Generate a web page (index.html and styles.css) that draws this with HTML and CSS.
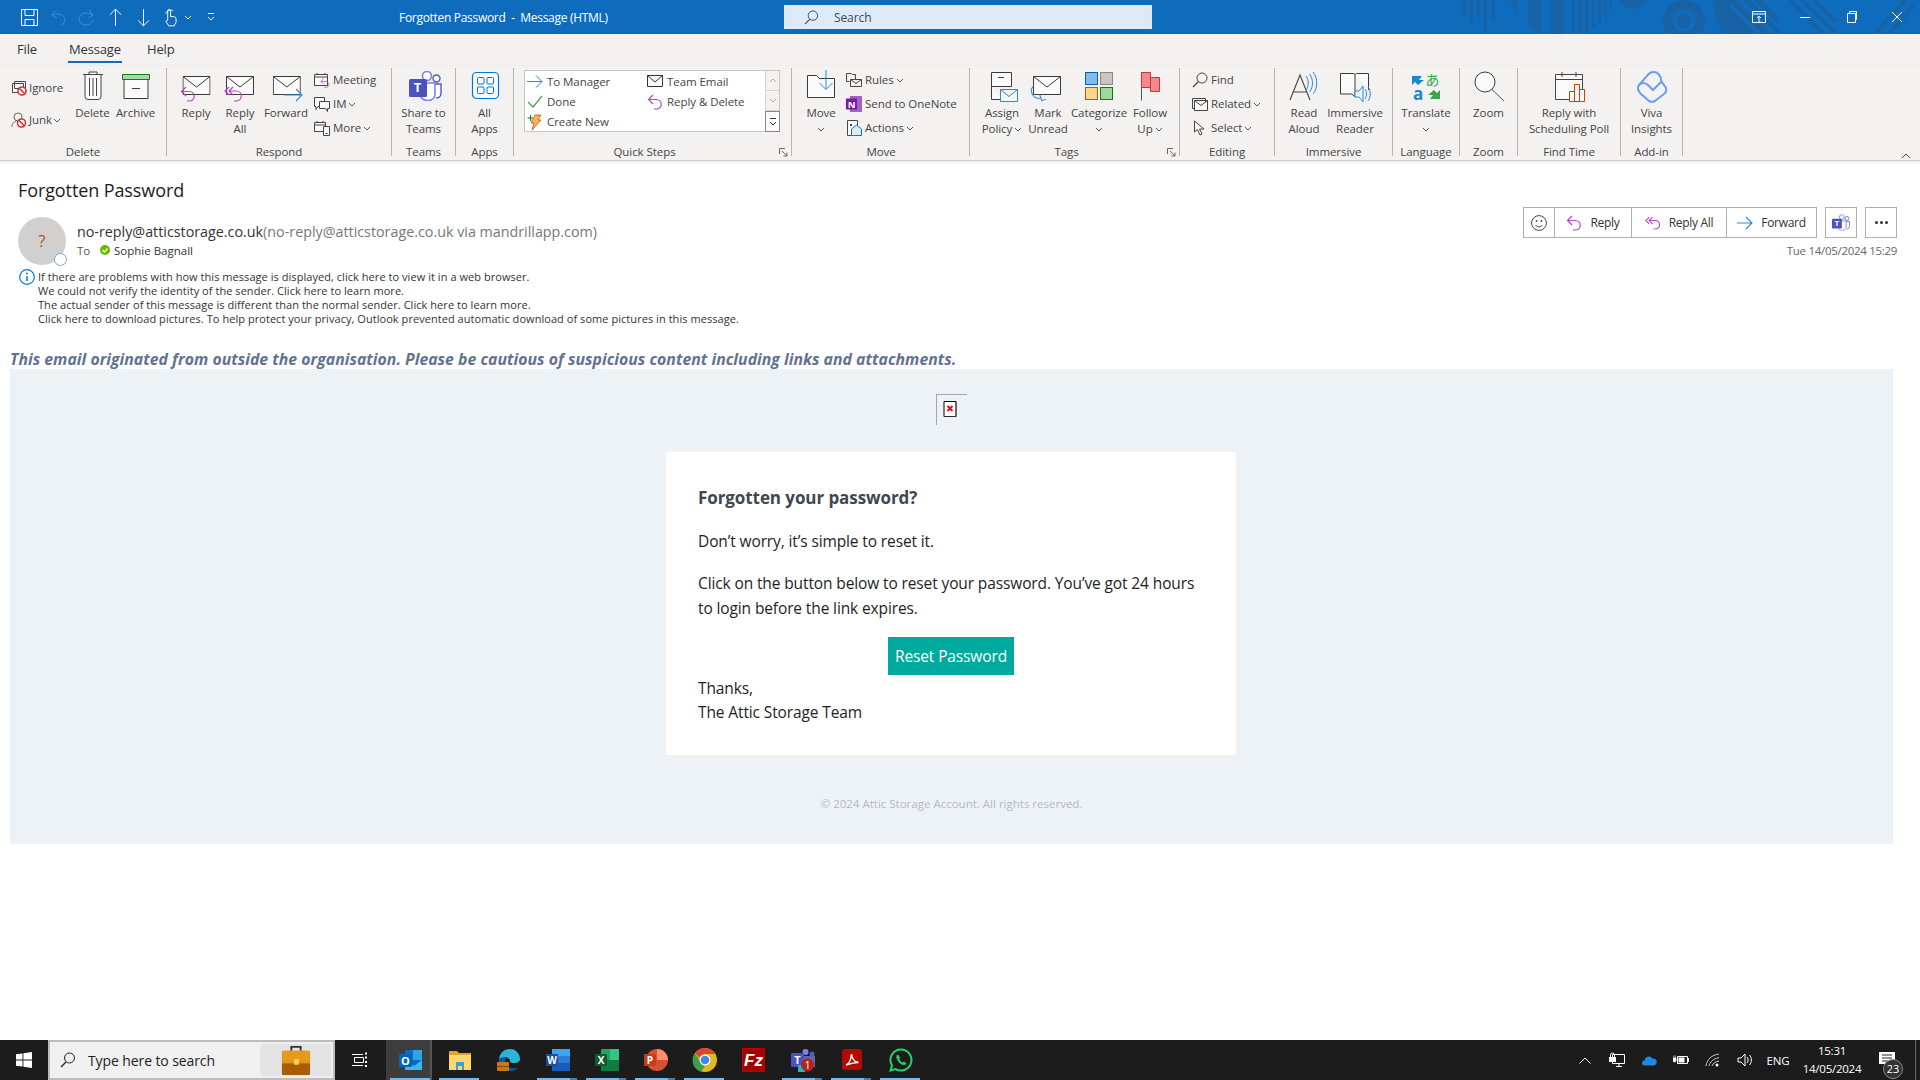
FILE: index.html
```html
<!DOCTYPE html>
<html lang="en">
<head>
<meta charset="utf-8">
<title>Forgotten Password - Message (HTML)</title>
<link rel="stylesheet" href="styles.css">
</head>
<body>
<svg class="defs" aria-hidden="true">
  <symbol id="env" viewBox="0 0 28 20"><path d="M.5.5h27v18H.5z" fill="#fafafa" stroke="#3b3a39"/><path d="M.5.5 14 11 27.5.5" fill="none" stroke="#3b3a39"/></symbol>
  <symbol id="chev" viewBox="0 0 8 5"><path d="M1 1l3 3 3-3" fill="none" stroke="#555" stroke-width="1"/></symbol>
  <symbol id="nosign" viewBox="0 0 10 10"><circle cx="5" cy="5" r="4" fill="#fff" stroke="#d13438" stroke-width="1.6"/><path d="M2.2 2.2l5.6 5.6" stroke="#d13438" stroke-width="1.6"/></symbol>
  <symbol id="replyarrow" viewBox="0 0 16 16"><path d="M6 1 1.5 5.5 6 10M1.5 5.5H9c7 0 7 9.5 0 9.5H7" fill="none" stroke="#b146c2" stroke-width="1.2"/></symbol>
  <symbol id="replyall" viewBox="0 0 19 16"><path d="M5 1 1 5l4 4M9 1 5 5l4 4M5 5h7c7 0 7 10 0 10h-2" fill="none" stroke="#b146c2" stroke-width="1.2"/></symbol>
  <symbol id="teamsbody" viewBox="0 0 33 30"><circle cx="18" cy="5" r="4.5" fill="#fff" stroke="#7b83eb" stroke-width="1.6"/><circle cx="27.5" cy="7.5" r="3.5" fill="#fff" stroke="#5059c9" stroke-width="1.4"/><path d="M23 13h9v9c0 3-2 5-5 5" fill="#fff" stroke="#5059c9" stroke-width="1.4"/><path d="M11 12h15v11c0 4-3 6.500-7 6.500S11 27 11 23z" fill="#fff" stroke="#7b83eb" stroke-width="1.6"/><rect y="8" width="18" height="18" rx="1.500" fill="#4b53bc"/></symbol>
</svg>
<div class="app">
  <header class="titlebar">
    <svg class="deco" viewBox="0 0 500 34" aria-hidden="true"><g fill="#1763a6"><path d="M42 0h4v16h-4zM49 0h4v23h-4zM56 0h4v17h-4zM63 0h4v32h-4zM71 0h4v20h-4zM90 0h7v14zM108 0h13v34l-13-8zM131 0h13v34h-13zM151 0h4v34h-4zM158 0h4v33h-4zM165 0h4v32h-4zM172 0h3v28h-3zM178 0h3v24h-3zM184 0h3v18h-3zM190 0h2v10h-2z"/><path d="M199 0h27a14 12 0 0 1-27 0z"/><path fill-rule="evenodd" d="M264 0a21 21 0 1 1 0 42 21 21 0 1 1 0-42zm0 10a11 11 0 1 0 0 22 11 11 0 1 0 0-22z"/><circle cx="264" cy="21" r="7.500"/><path d="M293 0h54c8 8 12 22 12 34h-55c-7-10-11-22-11-34z"/></g><g stroke="#0f6cbd" stroke-width="3.500"><path d="M310 5l30 29M320 0l34 34M332 0l28 28M344 0l20 20"/></g><g stroke="#1763a6" stroke-width="4"><path d="M370 0l34 34M382 0l34 34M394 0l22 22M455 34l30-34M468 34l26-28"/></g></svg>
    <div class="qat">
      <svg class="qat-i i-save" viewBox="0 0 17 17"><path d="M.5.5h16v16H.5zM4 .5v6h9v-6M4 16.500v-6h9v6" fill="none" stroke="#fff"/></svg>
      <svg class="qat-i i-undo" viewBox="0 0 16 17"><path d="M5 1 1 6l5 3M1 6c7-3 14 0 14 5 0 3-2 5-4 5" fill="none" stroke="#3f8fd2"/></svg>
      <svg class="qat-i i-redo" viewBox="0 0 16 17"><path d="M11 1l4 5-5 3M15 6C6 1 1 6 1 10c0 3 3 6 7 6 3 0 6-2 7-5" fill="none" stroke="#3f8fd2"/></svg>
      <svg class="qat-i i-up" viewBox="0 0 14 20"><path d="M7 19V1M1 7l6-6 6 6" fill="none" stroke="#fff"/></svg>
      <svg class="qat-i i-down" viewBox="0 0 14 20"><path d="M7 1v18M1 13l6 6 6-6" fill="none" stroke="#fff"/></svg>
      <svg class="qat-i i-touch" viewBox="0 0 14 20"><path d="M4 13V3a1.500 1.500 0 0 1 3 0v6h3c2 0 3 1 3 3v3l-2 4H5l-3-5 2-1" fill="none" stroke="#fff"/><path d="M2 6a5 5 0 0 1 8-3" fill="none" stroke="#fff"/></svg>
      <svg class="qat-i i-chev" viewBox="0 0 8 5"><path d="M1 1l3 3 3-3" fill="none" stroke="#fff"/></svg>
      <svg class="qat-i i-custom" viewBox="0 0 8 8"><path d="M1 .5h6M1 4l3 3 3-3" fill="none" stroke="#fff"/></svg>
    </div>
    <div class="doc-title">Forgotten Password&nbsp; - &nbsp;Message (HTML)</div>
    <div class="searchbox">
      <svg class="search-i" viewBox="0 0 16 16"><circle cx="9.500" cy="6" r="5" fill="none" stroke="#2b4a6b"/><path d="M6 10l-5 5" stroke="#2b4a6b" stroke-width="1.200"/></svg>
      <span>Search</span>
    </div>
    <div class="winctl">
      <svg class="win-i" viewBox="0 0 14 14"><path d="M.5 1.500h13v11H.5zM.5 4h13M7 12V6M5 8l2-2 2 2" fill="none" stroke="#fff"/></svg>
      <svg class="win-i" viewBox="0 0 14 14"><path d="M2 7.500h10" stroke="#fff"/></svg>
      <svg class="win-i" viewBox="0 0 14 14"><path d="M3.500 3.500h8v9h-8zM5.500 3.500v-2h7v8h-1" fill="none" stroke="#fff"/></svg>
      <svg class="win-i" viewBox="0 0 14 14"><path d="M2 2l10 10M12 2 2 12" stroke="#fff"/></svg>
    </div>
  </header>

  <nav class="tabs">
    <span class="tab t-file">File</span>
    <span class="tab t-msg">Message</span>
    <span class="tab t-help">Help</span>
  </nav>

  <section class="ribbon">
    <div class="group g-delete">
      <div class="gbody">
        <div class="smalls smalls-wide">
          <div class="sm sm-tight"><svg class="ic16" viewBox="0 0 16 16"><path d="M3.500 1.500h11v7h-11zM1.500 3.500h11v9h-11z" fill="#f6f6f6" stroke="#444"/><use href="#nosign" x="6" y="6" width="10" height="10"/></svg><span>Ignore</span></div>
          <div class="sm sm-tight"><svg class="ic16" viewBox="0 0 16 16"><circle cx="7" cy="5" r="4" fill="none" stroke="#666"/><path d="M1 15c0-4 2-5 4-6" fill="none" stroke="#666"/><use href="#nosign" x="5.500" y="6" width="10" height="10"/></svg><span>Junk</span><svg class="chev" viewBox="0 0 8 5"><use href="#chev"/></svg></div>
        </div>
        <div class="lg w43"><div class="lg-i"><svg viewBox="0 0 36 36"><path d="M8 6.500h20M14 6.500V4h8v2.500M10 6.500v22a3 3 0 0 0 3 3h10a3 3 0 0 0 3-3v-22M14.500 10v18M18 10v18M21.500 10v18" fill="#fafafa" stroke="#444"/></svg></div><span>Delete</span></div>
        <div class="lg w43"><div class="lg-i"><svg viewBox="0 0 36 36"><path d="M6 11.500h24v19H6z" fill="#fafafa" stroke="#3b3a39"/><path d="M4.500 6.500h27v5h-27z" fill="#a4dba4" stroke="#107c10"/><path d="M14 20.500h8" stroke="#3b3a39"/></svg></div><span>Archive</span></div>
      </div>
      <div class="glabel">Delete</div>
    </div>

    <div class="group g-respond">
      <div class="gbody">
        <div class="lg w44"><div class="lg-i"><svg viewBox="0 0 36 36"><use href="#env" x="4.500" y="8" width="28" height="20"/><use href="#replyarrow" x="2" y="18" width="16" height="16"/></svg></div><span>Reply</span></div>
        <div class="lg w44"><div class="lg-i"><svg viewBox="0 0 36 36"><use href="#env" x="4" y="8" width="28" height="20"/><use href="#replyall" x="2" y="18" width="19" height="16"/></svg></div><span>Reply<br>All</span></div>
        <div class="lg w48"><div class="lg-i"><svg viewBox="0 0 36 36"><use href="#env" x="4.800" y="8" width="28" height="20"/><path d="M16 27h18M28 21l6 6-6 6" fill="none" stroke="#2b88d8" stroke-width="1.100"/></svg></div><span>Forward</span></div>
        <div class="smalls">
          <div class="sm"><svg class="ic16" viewBox="0 0 16 16"><path d="M.5 2.500h13v11H.5zM.5 5h13M3 1v2M11 1v2" fill="#fafafa" stroke="#444"/><use href="#replyarrow" x="6" y="6" width="10" height="10"/></svg><span>Meeting</span></div>
          <div class="sm"><svg class="ic16" viewBox="0 0 16 16"><path d="M.5 1.500h10v9H4l-2 3v-3H.5z" fill="#fafafa" stroke="#444"/><path d="M5.500 5.500h10v7h-2v3l-2-3h-6z" fill="#fafafa" stroke="#444"/></svg><span>IM</span><svg class="chev" viewBox="0 0 8 5"><use href="#chev"/></svg></div>
          <div class="sm"><svg class="ic16" viewBox="0 0 16 16"><path d="M.5 2.500h11v9H.5zM.5 5h11M3 1v2M9 1v2" fill="#fafafa" stroke="#444"/><path d="M9.500 6.500h6v9h-6z" fill="#fafafa" stroke="#444"/><path d="M11.500 13.500h2" stroke="#444"/></svg><span>More</span><svg class="chev" viewBox="0 0 8 5"><use href="#chev"/></svg></div>
        </div>
      </div>
      <div class="glabel">Respond</div>
    </div>

    <div class="group g-teams">
      <div class="gbody center">
        <div class="lg"><div class="lg-i"><svg viewBox="0 0 36 36"><use href="#teamsbody" x="3" y="3" width="33" height="30"/><text x="11.500" y="24" text-anchor="middle" class="svgt" font-size="13" fill="#fff">T</text></svg></div><span>Share to<br>Teams</span></div>
      </div>
      <div class="glabel">Teams</div>
    </div>

    <div class="group g-apps">
      <div class="gbody center">
        <div class="lg"><div class="lg-i"><svg viewBox="0 0 36 36"><rect x="5.500" y="4.500" width="26" height="26" rx="4" fill="#fafafa" stroke="#0078d4" stroke-width="1.200"/><g fill="none" stroke="#0078d4"><rect x="10.500" y="9.500" width="6.500" height="6.500" rx="1"/><rect x="20" y="9.500" width="6.500" height="6.500" rx="1"/><rect x="10.500" y="19" width="6.500" height="6.500" rx="1"/><rect x="20" y="19" width="6.500" height="6.500" rx="1"/></g></svg></div><span>All<br>Apps</span></div>
      </div>
      <div class="glabel">Apps</div>
    </div>

    <div class="group g-quick">
      <div class="gbody">
        <div class="qsbox">
          <div class="qsgrid">
            <div class="qs"><svg class="ic16" viewBox="0 0 16 16"><path d="M0 7.500h15M9 1.500l6 6-6 6" fill="none" stroke="#2b88d8"/></svg><span>To Manager</span></div>
            <div class="qs"><svg class="ic16" viewBox="0 0 16 16"><path d="M.5 1.500h15v11H.5z" fill="#fafafa" stroke="#333"/><path d="M.5 1.500 8 8l7.500-6.500" fill="none" stroke="#333"/></svg><span>Team Email</span></div>
            <div class="qs"><svg class="ic16" viewBox="0 0 16 16"><path d="M1 8l5 5 9-11" fill="none" stroke="#4f9e4f" stroke-width="1.200"/></svg><span>Done</span></div>
            <div class="qs"><svg class="ic16" viewBox="0 0 16 16"><use href="#replyarrow" x="0" y="0" width="16" height="16"/></svg><span>Reply &amp; Delete</span></div>
            <div class="qs"><svg class="ic16" viewBox="0 0 16 16"><path d="M.5 4h6M3.500 1v6" stroke="#107c10"/><path d="M8 1h6l-3 5h3L5 16l2-7H4z" fill="#f7b75e" stroke="#ca5010" stroke-width=".8"/></svg><span>Create New</span></div>
          </div>
          <div class="qsscroll">
            <div class="qsbtn"><svg class="chev" viewBox="0 0 8 5"><path d="M1 4l3-3 3 3" fill="none" stroke="#aaa"/></svg></div>
            <div class="qsbtn"><svg class="chev" viewBox="0 0 8 5"><path d="M1 1l3 3 3-3" fill="none" stroke="#aaa"/></svg></div>
            <div class="qsbtn qsmore"><svg class="chev chev-more" viewBox="0 0 8 8"><path d="M1 .5h6M1 4l3 3 3-3" fill="none" stroke="#333"/></svg></div>
          </div>
        </div>
      </div>
      <div class="glabel">Quick Steps</div>
      <svg class="launcher" viewBox="0 0 9 9"><path d="M.5 6V.5H6M3 3l5 5M8 4.500V8H4.500" fill="none" stroke="#666"/></svg>
    </div>

    <div class="group g-move">
      <div class="gbody">
        <div class="lg w42"><div class="lg-i"><svg viewBox="0 0 36 36"><path d="M4.500 7.500h9l3 3h15v19h-27z" fill="#fafafa" stroke="#3b3a39"/><path d="M23 2v19M16.500 15l6.500 6.500 6.500-6.500" fill="none" stroke="#2b88d8"/></svg></div><span>Move</span><svg class="chev chev-line" viewBox="0 0 8 5"><use href="#chev"/></svg></div>
        <div class="smalls">
          <div class="sm"><svg class="ic16" viewBox="0 0 16 16"><path d="M.5 1.500h5l1 1h3v5M.5 1.500v8h3" fill="none" stroke="#444"/><path d="M4.500 7.500h11v7h-11zM4.500 7.500l5.500 4 5.500-4" fill="#fafafa" stroke="#444"/></svg><span>Rules</span><svg class="chev" viewBox="0 0 8 5"><use href="#chev"/></svg></div>
          <div class="sm"><svg class="ic16" viewBox="0 0 16 16"><rect x="4" y="0" width="12" height="16" fill="#a560c5"/><rect x="0" y="2.500" width="11" height="11" fill="#7719aa"/><text x="5.500" y="11.500" text-anchor="middle" class="svgt" font-size="9.500" fill="#fff">N</text></svg><span>Send to OneNote</span></div>
          <div class="sm"><svg class="ic16" viewBox="0 0 16 16"><path d="M1.500.5h10v15h-10z" fill="#fafafa" stroke="#444"/><path d="M4 4h2v2H4z" fill="#444"/><path d="M5.500 9l5-4 5 4v6.500h-10z" fill="#deecf9" stroke="#0078d4"/></svg><span>Actions</span><svg class="chev" viewBox="0 0 8 5"><use href="#chev"/></svg></div>
        </div>
      </div>
      <div class="glabel">Move</div>
    </div>

    <div class="group g-tags">
      <div class="gbody">
        <div class="lg w46"><div class="lg-i"><svg viewBox="0 0 36 36"><path d="M7.500 4.500h20v14h-20zM7.500 18.500v13h10" fill="#fafafa" stroke="#3b3a39"/><path d="M14 9.500h6" stroke="#3b3a39"/><path d="M16.500 21.500h17v12h-17zM16.500 21.500l8.500 7 8.500-7" fill="#eff6fc" stroke="#2b88d8"/></svg></div><span>Assign<br>Policy<svg class="chev inl" viewBox="0 0 8 5"><use href="#chev"/></svg></span></div>
        <div class="lg w46"><div class="lg-i"><svg viewBox="0 0 36 36"><use href="#env" x="3" y="8" width="28" height="20"/><path d="M6 17c-6 3-5 12 3 14M9 27v6.500h4.500" transform="rotate(-20 8 25)" fill="none" stroke="#2b88d8"/></svg></div><span>Mark<br>Unread</span></div>
        <div class="lg w56"><div class="lg-i"><svg viewBox="0 0 36 36"><rect x="4.500" y="4.500" width="12" height="12" fill="#83bcea" stroke="#0063b1"/><rect x="19.500" y="4.500" width="12" height="12" fill="#c8c6c4" stroke="#8a8886"/><rect x="4.500" y="19.500" width="12" height="12" fill="#f8d88c" stroke="#ca5010"/><rect x="19.500" y="19.500" width="12" height="12" fill="#9fd89f" stroke="#107c10"/></svg></div><span>Categorize</span><svg class="chev chev-line" viewBox="0 0 8 5"><use href="#chev"/></svg></div>
        <div class="lg w46"><div class="lg-i"><svg viewBox="0 0 36 36"><path d="M9.500 4.500v28" stroke="#555"/><path d="M9.500 4.500h9v15h-9z" fill="#f4868c" stroke="#d13438"/><path d="M18.500 9.500h9v14h-9z" fill="#f4868c" stroke="#d13438"/></svg></div><span>Follow<br>Up<svg class="chev inl" viewBox="0 0 8 5"><use href="#chev"/></svg></span></div>
      </div>
      <div class="glabel">Tags</div>
      <svg class="launcher" viewBox="0 0 9 9"><path d="M.5 6V.5H6M3 3l5 5M8 4.500V8H4.500" fill="none" stroke="#666"/></svg>
    </div>

    <div class="group g-edit">
      <div class="gbody">
        <div class="smalls smalls-edit">
          <div class="sm"><svg class="ic16" viewBox="0 0 16 16"><circle cx="10" cy="6" r="5" fill="none" stroke="#444"/><path d="M6.500 9.500 1 15" stroke="#444" stroke-width="1.200"/></svg><span>Find</span></div>
          <div class="sm"><svg class="ic16" viewBox="0 0 16 16"><path d="M.5 2.500h13v9M.5 2.500v10h2" fill="none" stroke="#444"/><path d="M2.500 4.500h13v10h-13zM2.500 4.500l6.500 5 6.500-5" fill="#fafafa" stroke="#444"/></svg><span>Related</span><svg class="chev" viewBox="0 0 8 5"><use href="#chev"/></svg></div>
          <div class="sm"><svg class="ic16" viewBox="0 0 16 16"><path d="M2.500 1v11l3-2.500L8 15l2-1-2.500-5H12z" fill="#fafafa" stroke="#444"/></svg><span>Select</span><svg class="chev" viewBox="0 0 8 5"><use href="#chev"/></svg></div>
        </div>
      </div>
      <div class="glabel">Editing</div>
    </div>

    <div class="group g-immersive">
      <div class="gbody">
        <div class="lg w44"><div class="lg-i"><svg viewBox="0 0 36 36"><path d="M4 32 14 7l10 25M7.500 24h13" fill="none" stroke="#444" stroke-width="1.100"/><path d="M22 8c3 4 3 10 0 14M25.500 6c4 5 4 13 0 18M29 4c5 6 5 16 0 22" transform="translate(-2 0)" fill="none" stroke="#2b88d8"/></svg></div><span>Read<br>Aloud</span></div>
        <div class="lg w58"><div class="lg-i"><svg viewBox="0 0 36 36"><path d="M3.500 5.500h13c1 0 1.500 1 1.500 1.500V29l-3-3h-11.500zM18 7c0-.5.500-1.500 1.500-1.500h12V22" fill="#fafafa" stroke="#3b3a39"/><path d="M18 23h4l4-5v16l-4-5h-4z" fill="#eff6fc" stroke="#2b88d8"/><path d="M28 21c2 3 2 7 0 10M31 19c3 4 3 10 0 14" fill="none" stroke="#2b88d8"/></svg></div><span>Immersive<br>Reader</span></div>
      </div>
      <div class="glabel">Immersive</div>
    </div>

    <div class="group g-lang">
      <div class="gbody center">
        <div class="lg"><div class="lg-i"><svg viewBox="0 0 36 36"><path d="M16 12h-5l3-4H4v9l3-3 3 3z" fill="#1e88c9"/><text x="24.500" y="17" text-anchor="middle" class="svgc" font-size="14" fill="#3aa64a">あ</text><text x="10" y="32" text-anchor="middle" class="svgt" font-size="17" fill="#1e88c9">a</text><path d="M20 27h5l-3 4h10v-9l-3 3-3-3z" fill="#3aa64a"/></svg></div><span>Translate</span><svg class="chev chev-line" viewBox="0 0 8 5"><use href="#chev"/></svg></div>
      </div>
      <div class="glabel">Language</div>
    </div>

    <div class="group g-zoom">
      <div class="gbody center">
        <div class="lg"><div class="lg-i"><svg viewBox="0 0 36 36"><circle cx="14" cy="14" r="10" fill="#fafafa" stroke="#3b3a39"/><path d="M21 21.500 33 33" stroke="#555"/></svg></div><span>Zoom</span></div>
      </div>
      <div class="glabel">Zoom</div>
    </div>

    <div class="group g-find">
      <div class="gbody center">
        <div class="lg"><div class="lg-i"><svg viewBox="0 0 36 36"><path d="M4.500 6.500h27v25h-27zM4.500 11.500h27M11 4v5M25 4v5" fill="#fafafa" stroke="#444"/><path d="M18.500 23.500h5v10h-5zM23.500 16.500h5v17h-5zM28.500 21.500h5v12h-5z" fill="#fafafa" stroke="#d83b01"/></svg></div><span>Reply with<br>Scheduling Poll</span></div>
      </div>
      <div class="glabel">Find Time</div>
    </div>

    <div class="group g-addin">
      <div class="gbody center">
        <div class="lg"><div class="lg-i"><svg viewBox="0 0 36 36"><g fill="none" stroke="#6b9cf5" stroke-width="2"><path d="M21 4c4 0 7 4 7 8 0 2 1 3 3 5 3 3 3 7 0 9l-9 7c-2 1-4 1-6 0L8 26c-3-3-4-6-2-9l8-9c2-3 4-4 7-4z"/><path d="M6 17c3-3 7-2 9 0l5 5 9-9" /></g></svg></div><span>Viva<br>Insights</span></div>
      </div>
      <div class="glabel">Add-in</div>
    </div>
    <svg class="collapse" viewBox="0 0 10 6"><path d="M1 5l4-4 4 4" fill="none" stroke="#444"/></svg>
  </section>

  <main class="pane">
    <h1 class="subject">Forgotten Password</h1>
    <div class="sender-row">
      <div class="avatar"><span>?</span><i class="presence"></i></div>
      <div class="sender">
        <div class="from">no-reply@atticstorage.co.uk<span class="via">(no-reply@atticstorage.co.uk via mandrillapp.com)</span></div>
        <div class="to"><span class="to-l">To</span><svg class="ok" viewBox="0 0 10 10"><circle cx="5" cy="5" r="5" fill="#6bb700"/><path d="M2.500 5l2 2 3-3.500" fill="none" stroke="#fff" stroke-width="1.200"/></svg><span>Sophie Bagnall</span></div>
      </div>
      <div class="actions">
        <div class="btnrow">
          <div class="btngroup">
            <div class="act a-emoji"><svg class="ic16b" viewBox="0 0 16 16"><circle cx="8" cy="8" r="7.400" fill="none" stroke="#444"/><circle cx="5.500" cy="6" r=".9" fill="#444"/><circle cx="10.500" cy="6" r=".9" fill="#444"/><path d="M4.500 10c2 2.500 5 2.500 7 0" fill="none" stroke="#444"/></svg></div>
            <div class="act a-reply"><svg class="ic16b" viewBox="0 0 16 16"><use href="#replyarrow"/></svg><span>Reply</span></div>
            <div class="act a-all"><svg class="ic16b" viewBox="0 0 19 16"><use href="#replyall"/></svg><span>Reply All</span></div>
            <div class="act a-fwd"><svg class="ic16b" viewBox="0 0 16 16"><path d="M0 8h15M9 2l6 6-6 6" fill="none" stroke="#2b88d8" stroke-width="1.100"/></svg><span>Forward</span></div>
          </div>
          <div class="sq"><svg class="ic18" viewBox="0 0 33 30"><use href="#teamsbody"/><text x="9" y="22" text-anchor="middle" class="svgt" font-size="14" fill="#fff">T</text></svg></div>
          <div class="sq sq-more"><i></i><i></i><i></i></div>
        </div>
        <div class="date">Tue 14/05/2024 15:29</div>
      </div>
    </div>
    <div class="infobar">
      <svg class="info-i" viewBox="0 0 16 16"><circle cx="8" cy="8" r="7.300" fill="#fff" stroke="#0078d4" stroke-width="1.200"/><path d="M8 7v5" stroke="#0078d4" stroke-width="1.500"/><circle cx="8" cy="4.500" r="1" fill="#0078d4"/></svg>
      <div class="info-lines">
        <div>If there are problems with how this message is displayed, click here to view it in a web browser.</div>
        <div>We could not verify the identity of the sender. Click here to learn more.</div>
        <div>The actual sender of this message is different than the normal sender. Click here to learn more.</div>
        <div>Click here to download pictures. To help protect your privacy, Outlook prevented automatic download of some pictures in this message.</div>
      </div>
    </div>
    <div class="banner">This email originated from outside the organisation. Please be cautious of suspicious content including links and attachments.</div>
    <div class="canvas">
      <div class="broken"><svg class="broken-i" viewBox="0 0 13 16"><path d="M.5.5h12v15H.5z" fill="#fff" stroke="#000"/><path d="M12.500 1v15H1" fill="none" stroke="#555"/><path d="M4 5l5 5M9 5l-5 5" stroke="#f00" stroke-width="1.800"/></svg></div>
      <div class="card">
        <h2>Forgotten your password?</h2>
        <p class="p1">Don’t worry, it’s simple to reset it.</p>
        <p class="p2">Click on the button below to reset your password. You’ve got 24 hours to login before the link expires.</p>
        <div class="cta-wrap"><a class="cta">Reset Password</a></div>
        <p class="p3">Thanks,<br>The Attic Storage Team</p>
      </div>
      <div class="legal">© 2024 Attic Storage Account. All rights reserved.</div>
    </div>
  </main>

  <footer class="taskbar">
    <div class="tb-start"><svg class="win-logo" viewBox="0 0 16 16"><path d="M0 2.300 6.500 1.400v6.200H0zM7.400 1.300 16 0v7.600H7.400zM0 8.400h6.500v6.200L0 13.700zM7.400 8.400H16V16l-8.600-1.300z" fill="#fff"/></svg></div>
    <div class="tb-search">
      <svg class="tbs-i" viewBox="0 0 16 16"><circle cx="9.500" cy="6" r="5" fill="none" stroke="#222"/><path d="M6 10l-5 5" stroke="#222" stroke-width="1.200"/></svg>
      <span>Type here to search</span>
      <div class="brief"><svg class="brief-i" viewBox="0 0 30 32"><path d="M10 6V2h10v4" fill="none" stroke="#333" stroke-width="2"/><rect y="6" width="30" height="26" rx="2" fill="#cc7a0b"/><rect y="6" width="30" height="13" rx="2" fill="#e39a1d"/><rect y="20" width="30" height="12" rx="2" fill="#a65d06"/><rect x="13" y="15" width="5" height="6" fill="#ffd24a"/></svg></div>
    </div>
    <div class="tb-view"><svg class="tv-i" viewBox="0 0 16 16"><path d="M3.500 5.500h9v5h-9z M1 2.500h11M1 13.500h11" fill="none" stroke="#fff"/><path d="M14 1.500h2M14 5.500h2M14 10h2M14 14h2" stroke="#fff" stroke-width="2"/></svg></div>
    <div class="tb-apps">
      <div class="app-i active open"><svg viewBox="0 0 24 24"><rect x="6" y="2" width="17" height="20" rx="1" fill="#0f6cbd"/><rect x="14" y="2" width="9" height="10" fill="#28a8ea"/><path d="M6 12l9 6 8-6v10H6z" fill="#50d9ff" opacity=".7"/><rect y="6" width="13" height="13" rx="1" fill="#0364b8"/><text x="6.500" y="16.500" text-anchor="middle" class="svgt" font-size="11" fill="#fff">O</text></svg></div>
      <div class="app-i open"><svg viewBox="0 0 24 24"><path d="M1 3h8l2 2h12v17H1z" fill="#e0a526"/><path d="M1 7h22v15H1z" fill="#ffd86b"/><path d="M8 14h8v8h-2v-4h-4v4H8z" fill="#3aa0dd"/></svg></div>
      <div class="app-i"><svg viewBox="0 0 24 24"><path d="M2 11C3 4 8 1 13 1c6 0 10 5 10 10 0 3-3 4-6 4s-5-1-4-3c-2-4-8-3-11-1z" fill="#2bb6d9"/><path d="M2 11c-1 6 4 12 11 12 3 0 6-1 8-3-5 1-13 0-13-7 0-2 2-3 4-3-4-1-8 0-10 1z" fill="#0c59a4"/><rect x="0" y="14" width="12" height="9" rx="1" fill="#c87a10"/><rect x="0" y="18" width="12" height="1" fill="#7a4a08"/></svg></div>
      <div class="app-i open multi"><svg viewBox="0 0 24 24"><rect x="6" y="1" width="18" height="22" rx="1" fill="#2b7cd3"/><rect x="6" y="1" width="18" height="7" fill="#41a5ee"/><rect x="6" y="15" width="18" height="8" fill="#185abd"/><rect y="6" width="12" height="12" rx="1" fill="#1a4da6"/><text x="6" y="15.500" text-anchor="middle" class="svgt" font-size="10" fill="#fff">W</text></svg></div>
      <div class="app-i open multi"><svg viewBox="0 0 24 24"><rect x="6" y="1" width="18" height="22" rx="1" fill="#21a366"/><rect x="15" y="1" width="9" height="11" fill="#33c481"/><rect x="6" y="12" width="18" height="11" fill="#107c41"/><rect y="6" width="12" height="12" rx="1" fill="#0e5c2f"/><text x="6" y="15.500" text-anchor="middle" class="svgt" font-size="10" fill="#fff">X</text></svg></div>
      <div class="app-i open multi"><svg viewBox="0 0 24 24"><circle cx="13" cy="12" r="11" fill="#d35230"/><path d="M13 1a11 11 0 0 1 11 11H13z" fill="#ff8f6b"/><rect y="6" width="12" height="12" rx="1" fill="#c43e1c"/><text x="6" y="15.500" text-anchor="middle" class="svgt" font-size="10" fill="#fff">P</text></svg></div>
      <div class="app-i open"><svg viewBox="0 0 24 24"><circle cx="12" cy="12" r="12" fill="#e4b71f"/><path d="M12 0a12 12 0 0 1 10.400 6H12a6 6 0 0 0-5.500 3.500L2 5a12 12 0 0 1 10-5z" fill="#db4437"/><path d="M2 5l5 8.500 5 4.500-4 5.800A12 12 0 0 1 2 5z" fill="#3d9d4a"/><circle cx="12" cy="12" r="5.500" fill="#fff"/><circle cx="12" cy="12" r="4.300" fill="#4285f4"/></svg></div>
      <div class="app-i"><svg viewBox="0 0 24 24"><rect width="23" height="24" fill="#bf0000"/><rect x="1" y="1" width="21" height="22" fill="#a50000"/><text x="11.500" y="18" text-anchor="middle" class="svgi" font-size="17" fill="#fff">Fz</text></svg></div>
      <div class="app-i open multi"><svg viewBox="0 0 24 24"><circle cx="14.500" cy="4" r="3" fill="#7b83eb"/><circle cx="21" cy="6" r="2.500" fill="#5059c9"/><path d="M9 8h15v11H9z" fill="#6264a7"/><rect y="5" width="13" height="14" rx="1" fill="#4b53bc"/><text x="6.500" y="16" text-anchor="middle" class="svgt" font-size="11" fill="#fff">T</text><rect x="7" y="17" width="7" height="7" fill="#2bb5c8"/><circle cx="16.500" cy="17" r="6.500" fill="#b3261e"/><text x="16.500" y="21" text-anchor="middle" class="svgn" font-size="10" fill="#fff">1</text></svg></div>
      <div class="app-i open multi"><svg viewBox="0 0 24 24"><rect x="2" y="1" width="20" height="21" rx="3" fill="#b30b00"/><path d="M6 17c3-1 5-6 5.500-11 .5 5 3 8 7 8.500-4 0-8 1-12.500 2.500z" fill="none" stroke="#fff" stroke-width="1.400"/></svg></div>
      <div class="app-i open"><svg viewBox="0 0 24 24"><path d="M12 1.500A10.500 10.500 0 0 0 3 17.500L1.500 22.500l5.200-1.400A10.500 10.500 0 1 0 12 1.500z" fill="none" stroke="#25d366" stroke-width="2"/><path d="M8 7c-1 1-1 3 1 6s4 4 6 4c1.500 0 2-1 2.200-2l-2.500-1.500-1 1c-1.500-.5-3-2-3.500-3.500l1-1L9.500 7z" fill="#25d366"/></svg></div>
    </div>
    <div class="tray">
      <div class="tr"><svg class="tr-chev" viewBox="0 0 12 7"><path d="M.5 6.500 6 1l5.500 5.500" fill="none" stroke="#fff"/></svg></div>
      <div class="tr"><svg class="tr-i" viewBox="0 0 16 16"><path d="M3.500 2.500h12v9h-12zM7 14.500h6M10 11.500v3" fill="none" stroke="#fff"/><rect x="0" y="5" width="7" height="5" fill="#fff"/><path d="M1.500 5V3a2 2 0 0 1 4 0v2" fill="none" stroke="#fff"/></svg></div>
      <div class="tr"><svg class="tr-i" viewBox="0 0 16 12"><path d="M4 11.500C0 11.500 0 7 3.500 6.500 4 2 10 1 11.500 4.500c3-.5 5 2 4 4.500-.5 1.500-1.500 2.500-3 2.500z" fill="#1e88e5"/></svg></div>
      <div class="tr"><svg class="tr-i" viewBox="0 0 16 16"><path d="M4.500 4.500h10v7h-10z" fill="none" stroke="#fff"/><rect x="5.500" y="5.500" width="6" height="5" fill="#fff"/><path d="M15 6.500h1v3h-1zM0 6h3v2.500a1.500 1.500 0 0 1-3 0zM.8 3.500V6M2.300 3.500V6" fill="#fff" stroke="#fff" stroke-width=".6"/></svg></div>
      <div class="tr"><svg class="tr-i" viewBox="0 0 16 16"><g fill="none" stroke="#ccc"><path d="M1 14C2 7 7 3 14 2M4 14c1-4 4-7 10-8.500M7 14c1-3 3-4 7-5"/></g><circle cx="12" cy="13" r="1.500" fill="#fff"/></svg></div>
      <div class="tr"><svg class="tr-i" viewBox="0 0 16 16"><path d="M1 6h3l4-4v12l-4-4H1z" fill="none" stroke="#fff"/><path d="M10 5c1.500 2 1.500 4 0 6M12.500 3c2.500 3 2.500 7 0 10" fill="none" stroke="#fff"/></svg></div>
      <div class="tr-eng">ENG</div>
      <div class="clock"><div>15:31</div><div>14/05/2024</div></div>
      <div class="notif"><svg class="notif-i" viewBox="0 0 16 14"><path d="M0 0h16v12H0z" fill="#fff"/><path d="M3 3h10M3 6h10M3 9h6" stroke="#222"/></svg><span class="notif-b">23</span></div>
      <div class="showdesk"></div>
    </div>
  </footer>
</div>
</body>
</html>
```
FILE: styles.css
```css
* { box-sizing: border-box; }
html, body { margin: 0; padding: 0; }
body { font-family: "Open Sans", "Noto Sans", sans-serif; color: #444; background: #fff; }
.defs { position: absolute; width: 0; height: 0; }
.svgt { font-family: "Open Sans", sans-serif; font-weight: 700; }
.svgn { font-family: "Open Sans", sans-serif; }
.svgi { font-family: "Liberation Sans", sans-serif; font-weight: 700; font-style: italic; }
.svgc { font-family: "Noto Sans CJK JP", sans-serif; }
.app { width: 1920px; height: 1080px; display: flex; flex-direction: column; overflow: hidden; }

/* title bar */
.titlebar { position: relative; height: 34px; flex: none; background: #0f6cbd; display: flex; align-items: center; overflow: hidden; color: #fff; }
.deco { position: absolute; left: 1420px; top: 0; width: 500px; height: 34px; }
.qat { width: 399px; flex: none; display: flex; align-items: center; height: 34px; position: relative; }
.qat-i { display: block; flex: none; }
.i-save { width: 17px; height: 17px; margin-left: 21px; }
.i-undo { width: 15px; height: 17px; margin-left: 13px; }
.i-redo { width: 16px; height: 17px; margin-left: 12px; }
.i-up { width: 13px; height: 19px; margin-left: 15px; }
.i-down { width: 13px; height: 19px; margin-left: 15px; }
.i-touch { width: 13px; height: 19px; margin-left: 13.500px; }
.i-chev { width: 8px; height: 5px; margin-left: 7px; }
.i-custom { width: 8px; height: 8px; margin-left: 15px; }
.doc-title { width: 385px; flex: none; font-size: 12px; letter-spacing: -.3px; white-space: nowrap; }
.searchbox { width: 368px; height: 24px; flex: none; background: #deeaf7; color: #3a4a5c; font-size: 12px; letter-spacing: -.1px; display: flex; align-items: center; padding-left: 20px; gap: 15px; position: relative; }
.search-i { width: 15px; height: 15px; }
.winctl { position: relative; margin-left: auto; display: flex; align-items: center; padding-right: 16px; gap: 32px; }
.win-i { width: 14px; height: 14px; display: block; }

/* tabs */
.tabs { height: 32px; flex: none; background: #f3f2f1; display: flex; font-size: 13px; letter-spacing: -.15px; color: #333; position: relative; }
.tab { display: block; line-height: 31px; height: 32px; }
.t-file { margin-left: 17px; }
.t-msg { margin-left: 31px; width: 54px; text-align: center; border-bottom: 2px solid #0f6cbd; height: 29px; color: #333; white-space: nowrap; }
.t-help { margin-left: 25px; }

/* ribbon */
.ribbon { height: 95px; flex: none; background: #f3f2f1; display: flex; border-bottom: 1px solid #d2d0ce; box-shadow: 0 1px 3px rgba(0,0,0,.12); position: relative; padding-top: 2px; z-index: 1; font-size: 11.5px; letter-spacing: -.06px; color: #444; }
.group { height: 88px; border-right: 1px solid #b8b6b4; position: relative; display: flex; flex-direction: column; flex: none; }
.gbody { height: 76px; display: flex; flex: none; }
.gbody.center { justify-content: center; }
.glabel { height: 12px; line-height: 16px; text-align: center; white-space: nowrap; color: #444; }
.g-delete { width: 167px; }
.g-respond { width: 225px; padding-left: 7px; }
.g-teams { width: 64px; }
.g-apps { width: 58px; }
.g-quick { width: 278px; }
.g-quick .glabel { padding-right: 16px; }
.g-move { width: 178px; padding-left: 8px; }
.g-tags { width: 210px; padding-left: 9px; }
.g-tags .glabel { padding-right: 18px; }
.g-edit { width: 95px; }
.g-immersive { width: 118px; padding-left: 7px; }
.g-lang { width: 67px; }
.g-zoom { width: 58px; }
.g-find { width: 103px; }
.g-addin { width: 62px; }
.g-respond .glabel, .g-move .glabel, .g-tags .glabel, .g-immersive .glabel { margin-left: -7px; }

.lg { display: flex; flex-direction: column; align-items: center; text-align: center; line-height: 16px; white-space: nowrap; flex: none; }
.lg-i { height: 37px; width: 36px; flex: none; }
.lg-i svg { width: 36px; height: 36px; display: block; overflow: visible; }
.lg > span { display: block; }
.w42 { width: 42px; } .w43 { width: 43px; } .w44 { width: 44px; } .w46 { width: 46px; } .w48 { width: 48px; } .w56 { width: 56px; } .w58 { width: 58px; }
.chev { width: 8px; height: 5px; display: block; flex: none; margin-left: 2px; }
.sm .chev { margin-left: -1px; }
.chev-line { margin: 6px 0 0; }
.chev.inl { display: inline-block; vertical-align: middle; }
.ic16 { width: 16px; height: 16px; display: block; flex: none; }

.smalls { display: flex; flex-direction: column; padding: 0 0 0 4px; flex: none; }
.sm { height: 24px; display: flex; align-items: center; gap: 3px; white-space: nowrap; flex: none; }
.sm span, .qs span { margin-top: -2px; }
.smalls-wide { width: 71px; padding: 4px 0 0 11px; }
.smalls-wide .sm { height: 32px; gap: 2px; }
.smalls-edit { padding-left: 12px; }

.qsbox { width: 256px; height: 62px; margin: 2px 0 0 10px; background: #fff; border: 1px solid #c8c6c4; display: flex; }
.qsgrid { flex: 1; display: grid; grid-template-columns: 120px 1fr; grid-auto-rows: 20px; padding-top: 1px; }
.qs { display: flex; align-items: center; gap: 4px; padding-left: 2px; white-space: nowrap; }
.qsscroll { width: 14px; flex: none; display: flex; flex-direction: column; background: #f3f2f1; border-left: 1px solid #d6d4d2; }
.qsbtn { height: 20px; display: flex; align-items: center; justify-content: center; border-bottom: 1px solid #d6d4d2; }
.qsbtn .chev { margin: 0; }
.qsmore { flex: 1; border: 1px solid #8a8886; margin: 0 -1px -1px -1px; background: #fbfbfb; }
.chev-more { height: 8px; }
.launcher { position: absolute; width: 9px; height: 9px; right: 3px; bottom: -1px; }
.collapse { position: absolute; right: 9px; top: 87px; width: 10px; height: 6px; }

/* reading pane */
.pane { flex: 1; min-height: 0; background: #fff; display: flex; flex-direction: column; }
.subject { margin: 16px 0 0 18px; font-size: 18px; font-weight: 400; line-height: 26px; color: #1b1b1b; letter-spacing: -.1px; }
.sender-row { display: flex; height: 63px; margin-top: 4px; padding: 0 23px 0 18px; }
.avatar { width: 48px; height: 48px; margin-top: 10px; border-radius: 50%; background: #d2d0ce; position: relative; display: flex; align-items: center; justify-content: center; color: #a5581a; font-size: 16px; flex: none; }
.presence { position: absolute; right: -1px; bottom: -1px; width: 13px; height: 13px; border-radius: 50%; background: #fff; border: 1px solid #7aa7c7; }
.sender { margin: 15px 0 0 11px; flex: 1; }
.from { font-size: 14.3px; line-height: 19px; letter-spacing: 0; color: #333; white-space: nowrap; }
.via { color: #777; }
.to { display: flex; align-items: center; height: 18px; font-size: 11.5px; letter-spacing: 0; color: #333; }
.to-l { width: 23px; color: #555; }
.ok { width: 10px; height: 10px; margin-right: 4px; }
.actions { display: flex; flex-direction: column; align-items: flex-end; }
.btnrow { display: flex; height: 31px; }
.btngroup { display: flex; border: 1px solid #aeaeae; height: 31px; }
.act { display: flex; align-items: center; justify-content: center; gap: 8px; font-size: 12px; letter-spacing: -.3px; border-right: 1px solid #aeaeae; color: #333; flex: none; }
.act:last-child { border-right: 0; }
.a-emoji { width: 31px; } .a-reply { width: 77px; } .a-all { width: 95px; } .a-fwd { width: 89px; }
.ic16b { width: 16px; height: 16px; display: block; flex: none; }
.sq { width: 32px; height: 31px; margin-left: 8px; border: 1px solid #aeaeae; display: flex; align-items: center; justify-content: center; gap: 2px; flex: none; }
.ic18 { width: 18px; height: 17px; display: block; }
.sq-more i { width: 3px; height: 3px; background: #333; border-radius: 50%; display: block; }
.date { margin-top: 5px; font-size: 11.5px; line-height: 16px; color: #666; letter-spacing: -.3px; white-space: nowrap; }

.infobar { display: flex; padding-left: 19px; gap: 3px; height: 56px; flex: none; }
.info-i { width: 16px; height: 16px; margin-top: -1px; flex: none; display: block; }
.info-lines { font-size: 11px; line-height: 14px; color: #333; letter-spacing: .05px; white-space: nowrap; }

.banner { height: 43px; flex: none; padding: 22px 0 0 10px; line-height: 22px; font-size: 15.8px; font-weight: 700; font-style: italic; color: #62728f; letter-spacing: .02px; white-space: nowrap; }
.canvas { height: 475px; flex: none; margin: 0 27px 0 10px; background: #edf2f7; padding-top: 25px; display: flex; flex-direction: column; align-items: center; }
.broken { width: 31px; height: 31px; flex: none; border-top: 1px solid #a6a6a6; border-left: 1px solid #a6a6a6; padding: 6px 0 0 6px; }
.broken-i { width: 14px; height: 16px; display: block; }
.card { width: 570px; height: 303px; flex: none; margin: 27px 1px 0 0; background: #fff; padding: 34px 32px 0; color: #1e1e1e; font-size: 15.5px; line-height: 25px; letter-spacing: -.12px; }
.card h2 { margin: 0; font-size: 17px; line-height: 24px; font-weight: 700; color: #3d4852; letter-spacing: -.08px; }
.card p { margin: 0; }
.p1 { margin-top: 19px !important; }
.p2 { margin-top: 17px !important; }
.cta-wrap { display: flex; justify-content: center; margin: 16px 0 0; }
.cta { width: 126px; height: 38px; background: #00a99d; color: #fff; display: flex; align-items: center; justify-content: center; white-space: nowrap; padding-top: 1px; }
.p3 { line-height: 24px; margin-top: 1px !important; }
.legal { margin-top: 40px; font-size: 11.5px; line-height: 18px; color: #b5b8c8; letter-spacing: 0; }

/* taskbar */
.taskbar { height: 40px; flex: none; background: #1c1c1c; display: flex; align-items: stretch; color: #fff; }
.tb-start { width: 48px; flex: none; display: flex; align-items: center; justify-content: center; }
.win-logo { width: 16px; height: 16px; }
.tb-search { width: 287px; flex: none; background: #f0f0f0; border: 2px solid #bdbdbd; display: flex; align-items: center; padding-left: 10px; color: #222; font-size: 14px; letter-spacing: -.1px; }
.tbs-i { width: 16px; height: 16px; margin-right: 12px; flex: none; }
.brief { margin-left: auto; margin-right: 2px; width: 71px; height: 32px; background: #e3e3e3; border-radius: 4px; display: flex; align-items: center; justify-content: center; }
.brief-i { width: 30px; height: 30px; }
.tb-view { width: 51px; flex: none; display: flex; align-items: center; justify-content: center; padding-right: 3px; }
.tv-i { width: 16px; height: 16px; }
.tb-apps { display: flex; flex: none; }
.app-i { width: 49px; position: relative; display: flex; align-items: center; justify-content: center; flex: none; }
.app-i svg { width: 24px; height: 24px; display: block; overflow: visible; }
.app-i.active { background: #3d3d3d; box-shadow: inset -3px 0 0 #1c1c1c, inset -5px 0 0 #555; }
.app-i.open::after { content: ""; position: absolute; left: 4px; right: 5px; bottom: 0; height: 2px; background: #76b9ed; }
.app-i.multi::before { content: ""; position: absolute; right: 5px; bottom: 0; height: 2px; width: 7px; background: #4a7ea6; z-index: 1; }
.tray { margin-left: auto; display: flex; align-items: center; height: 40px; flex: none; }
.tr { width: 32px; display: flex; align-items: center; justify-content: center; flex: none; }
.tr-chev { width: 12px; height: 7px; }
.tr-i { width: 16px; height: 16px; }
.tr-eng { width: 34px; text-align: center; font-size: 11.5px; letter-spacing: -.2px; flex: none; }
.clock { width: 74px; text-align: center; font-size: 11.5px; line-height: 18px; letter-spacing: -.25px; flex: none; }
.notif { width: 46px; height: 40px; position: relative; flex: none; }
.notif-i { position: absolute; left: 10px; top: 12px; width: 16px; height: 14px; }
.notif-b { position: absolute; left: 14px; top: 19px; width: 20px; height: 20px; border-radius: 50%; background: #333; border: 1px solid #888; font-size: 11px; line-height: 18px; text-align: center; }
.showdesk { width: 5px; height: 40px; border-left: 1px solid #666; flex: none; }
```
